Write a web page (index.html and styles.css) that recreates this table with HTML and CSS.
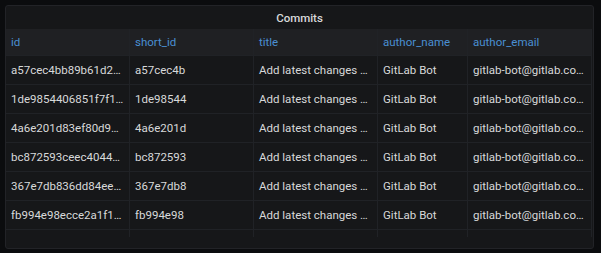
FILE: index.html
```html
<!DOCTYPE html>
<html>
<head>
<meta charset="utf-8">
<link rel="stylesheet" href="styles.css">
</head>
<body>
<div class="panel">
  <div class="panel-title">Commits</div>
  <div class="table">
    <div class="row head">
      <div class="cell">id</div>
      <div class="cell">short_id</div>
      <div class="cell">title</div>
      <div class="cell">author_name</div>
      <div class="cell">author_email</div>
    </div>
    <div class="row">
      <div class="cell">a57cec4bb89b61d2…</div>
      <div class="cell">a57cec4b</div>
      <div class="cell">Add latest changes …</div>
      <div class="cell">GitLab Bot</div>
      <div class="cell">gitlab-bot@gitlab.co…</div>
    </div>
    <div class="row">
      <div class="cell">1de9854406851f7f1…</div>
      <div class="cell">1de98544</div>
      <div class="cell">Add latest changes …</div>
      <div class="cell">GitLab Bot</div>
      <div class="cell">gitlab-bot@gitlab.co…</div>
    </div>
    <div class="row">
      <div class="cell">4a6e201d83ef80d9…</div>
      <div class="cell">4a6e201d</div>
      <div class="cell">Add latest changes …</div>
      <div class="cell">GitLab Bot</div>
      <div class="cell">gitlab-bot@gitlab.co…</div>
    </div>
    <div class="row">
      <div class="cell">bc872593ceec4044…</div>
      <div class="cell">bc872593</div>
      <div class="cell">Add latest changes …</div>
      <div class="cell">GitLab Bot</div>
      <div class="cell">gitlab-bot@gitlab.co…</div>
    </div>
    <div class="row">
      <div class="cell">367e7db836dd84ee…</div>
      <div class="cell">367e7db8</div>
      <div class="cell">Add latest changes …</div>
      <div class="cell">GitLab Bot</div>
      <div class="cell">gitlab-bot@gitlab.co…</div>
    </div>
    <div class="row">
      <div class="cell">fb994e98ecce2a1f1…</div>
      <div class="cell">fb994e98</div>
      <div class="cell">Add latest changes …</div>
      <div class="cell">GitLab Bot</div>
      <div class="cell">gitlab-bot@gitlab.co…</div>
    </div>
    <div class="row filler">
      <div class="cell"></div>
      <div class="cell"></div>
      <div class="cell"></div>
      <div class="cell"></div>
      <div class="cell"></div>
    </div>
  </div>
</div>
</body>
</html>
```
FILE: styles.css
```css
html, body {
  margin: 0;
  padding: 0;
  background: #0b0c0e;
}
body {
  padding: 5px;
  font-family: Roboto, "Liberation Sans", sans-serif;
  font-size: 11.5px;
  color: #d8d9da;
}
.panel {
  width: 589px;
  height: 244px;
  box-sizing: border-box;
  background: #161719;
  border: 1px solid #222327;
  border-radius: 3px;
  overflow: hidden;
}
.panel-title {
  height: 23px;
  line-height: 24px;
  text-align: center;
  font-weight: 500;
  font-size: 11.5px;
  color: #d8d9da;
}
.table {
  width: 586px;
}
.row {
  display: grid;
  grid-template-columns: 124px 124px 124px 90px 124px;
  height: 29px;
  border-bottom: 1px solid #202226;
  box-sizing: border-box;
}
.row.head {
  height: 27px;
  background: #1f2023;
  color: #4a8fd2;
}
.row.filler {
  height: 7px;
  border-bottom: none;
}
.cell {
  border-right: 1px solid #202226;
  padding: 0 5px;
  min-width: 0;
  overflow: hidden;
  white-space: nowrap;
  text-overflow: ellipsis;
  line-height: 28px;
}
.row.head .cell {
  line-height: 26px;
}
```
